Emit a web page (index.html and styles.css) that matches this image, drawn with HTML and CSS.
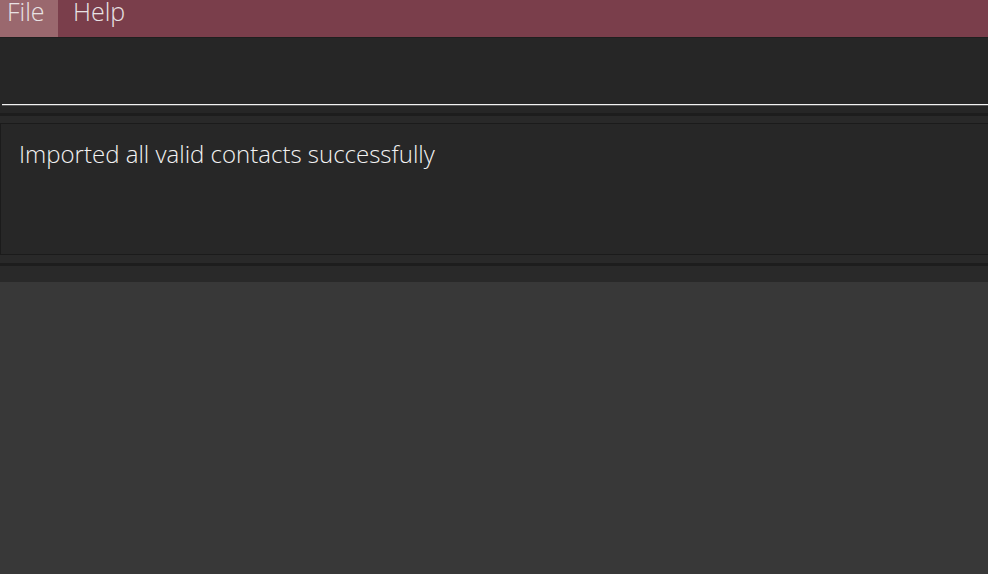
FILE: index.html
```html
<!DOCTYPE html>
<html>
<head>
<meta charset="utf-8">
<link rel="stylesheet" href="styles.css">
</head>
<body>
<div class="menubar">
  <div class="menu-item active">File</div>
  <div class="menu-item">Help</div>
</div>
<div class="command">
  <div class="command-field"></div>
</div>
<div class="result-pane">
  <div class="result-box">Imported all valid contacts successfully</div>
</div>
<div class="list-pane"></div>
</body>
</html>
```
FILE: styles.css
```css
html, body {
  margin: 0;
  padding: 0;
  background: #383838;
  font-family: "Open Sans", "Noto Sans", sans-serif;
  font-weight: 300;
}
.menubar {
  display: flex;
  height: 37px;
  background: #7a3e4b;
  border-bottom: 1px solid #1f1f1f;
}
.menu-item {
  color: #e8e2e4;
  font-size: 25px;
  line-height: 23px;
  padding: 0 0 0 15px;
  height: 37px;
  box-sizing: border-box;
}
.menu-item.active {
  background: #9a686e;
  padding-left: 7px;
  width: 58px;
}
.command {
  background: #262626;
  height: 78px;
  padding-left: 2px;
  box-sizing: border-box;
  padding-top: 66px;
  border-bottom: 3px solid #1d1d1d;
}
.command-field {
  height: 1px;
  background: #f2f2f2;
  box-shadow: 0 0.5px 0 rgba(242,242,242,0.5);
}
.result-pane {
  background: #292929;
  padding: 7px 0 8px 0;
  border-bottom: 3px solid #1d1d1d;
}
.result-box {
  background: #272727;
  border: 1px solid #1b1b1b;
  border-right: none;
  height: 132px;
  color: #f2f2f2;
  font-size: 24px;
  padding: 16px 18px;
  box-sizing: border-box;
  line-height: 28px;
}
.list-pane {
  background: #292929;
  height: 16px;
}
```
